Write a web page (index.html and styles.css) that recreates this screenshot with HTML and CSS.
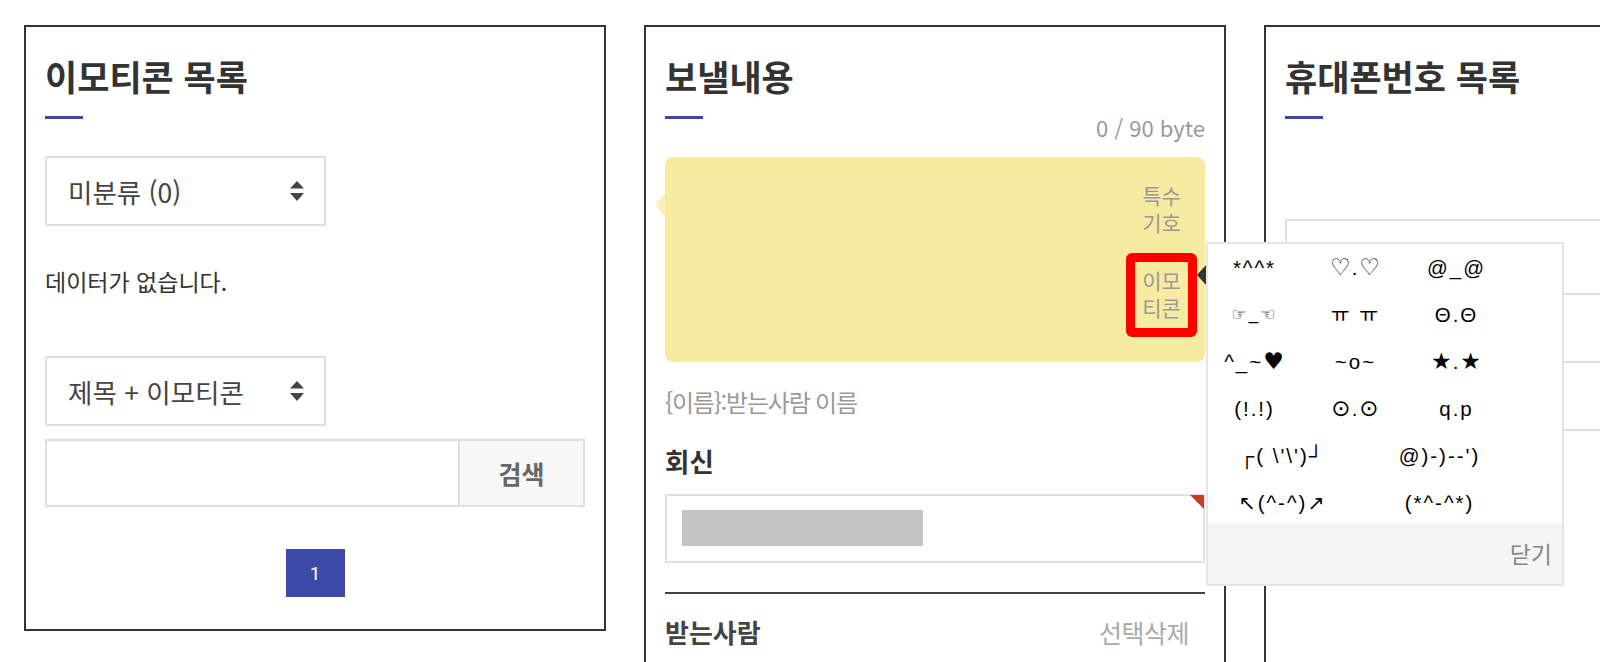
FILE: index.html
```html
<!DOCTYPE html>
<html lang="ko">
<head>
<meta charset="utf-8">
<title>문자 보내기</title>
<link rel="stylesheet" href="styles.css">
</head>
<body>
<div class="page">
  <section class="panel panel-emo">
    <h2 class="title">이모티콘 목록</h2>
    <div class="bar"><span class="accent"></span></div>
    <div class="select select-cat">
      <span class="select-text">미분류 (0)</span>
      <svg class="updown" width="14" height="20" viewBox="0 0 14 20"><path d="M0 7.5 L7 0 L14 7.5 Z M0 12 L14 12 L7 20 Z" fill="#444"/></svg>
    </div>
    <p class="empty">데이터가 없습니다.</p>
    <div class="select select-field">
      <span class="select-text">제목 + 이모티콘</span>
      <svg class="updown" width="14" height="20" viewBox="0 0 14 20"><path d="M0 7.5 L7 0 L14 7.5 Z M0 12 L14 12 L7 20 Z" fill="#444"/></svg>
    </div>
    <div class="search">
      <div class="search-input"></div>
      <div class="search-btn">검색</div>
    </div>
    <div class="paging"><span class="page-num">1</span></div>
  </section>

  <section class="panel panel-msg">
    <h2 class="title">보낼내용</h2>
    <div class="bar"><span class="accent"></span><span class="bytes">0 / 90 byte</span></div>
    <div class="bubble">
      <span class="bubble-tail"></span>
      <div class="bubble-text"></div>
      <div class="bubble-tools">
        <div class="tool">특수<br>기호</div>
        <div class="tool tool-active">이모<br>티콘</div>
      </div>
      <div class="emo-pop">
        <span class="emo-arrow"></span>
        <ul class="emo-list">
          <li>*^^*</li>
          <li><span class="sym">♡</span>.<span class="sym">♡</span></li>
          <li>@_@</li>
          <li class="hands">☞_☜</li>
          <li>ㅠ ㅠ</li>
          <li>Θ.Θ</li>
          <li>^_~<span class="sym">♥</span></li>
          <li>~o~</li>
          <li><span class="sym">★</span>.<span class="sym">★</span></li>
          <li>(!.!)</li>
          <li><span class="sym">⊙</span>.<span class="sym">⊙</span></li>
          <li>q.p</li>
          <li class="wide">┌( \'\')┘</li>
          <li class="wide">@)-)--')</li>
          <li class="wide">↖(^-^)↗</li>
          <li class="wide">(*^-^*)</li>
        </ul>
        <div class="emo-foot">닫기</div>
      </div>
    </div>
    <p class="hint">{이름}:받는사람 이름</p>
    <h3 class="label">회신</h3>
    <div class="reply">
      <span class="reply-value"></span>
      <span class="reply-flag"></span>
    </div>
    <div class="recv-head">
      <h3 class="label">받는사람</h3>
      <span class="recv-del">선택삭제</span>
    </div>
  </section>

  <section class="panel panel-phone">
    <h2 class="title">휴대폰번호 목록</h2>
    <div class="bar"><span class="accent"></span></div>
    <div class="phone-box">
      <div class="phone-row phone-row-head"></div>
      <div class="phone-row"></div>
      <div class="phone-row"></div>
    </div>
  </section>
</div>
</body>
</html>
```

FILE: styles.css
```css
html, body {
  margin: 0;
  padding: 0;
  background: #fff;
}

body {
  width: 1600px;
  height: 662px;
  overflow: hidden;
  font-family: "Noto Sans CJK KR", "Noto Sans", sans-serif;
  color: #333;
}

.page {
  display: flex;
  align-items: flex-start;
  gap: 38px;
  padding: 25px 0 0 24px;
}

.panel {
  flex: none;
  width: 582px;
  box-sizing: border-box;
  border: 2px solid #333;
  padding: 26px 19px 0;
  background: #fff;
}

.panel-emo {
  height: 606px;
}

.panel-msg,
.panel-phone {
  height: 720px;
}

.title {
  margin: 0;
  font-size: 35px;
  line-height: 46px;
  font-weight: 700;
  color: #333;
}

.bar {
  display: flex;
  justify-content: space-between;
  align-items: flex-start;
  height: 24px;
  margin-top: 16px;
}

.accent {
  display: block;
  width: 38px;
  height: 3px;
  margin-top: 1px;
  background: #3d49a6;
}

.bytes {
  font-size: 22px;
  line-height: 24px;
  color: #999;
}

/* ---------- panel 1 ---------- */
.select {
  display: flex;
  align-items: center;
  justify-content: space-between;
  box-sizing: border-box;
  width: 281px;
  height: 70px;
  border: 2px solid #e0e0e0;
  padding: 0 20px 0 21px;
}

.select-cat {
  margin-top: 17px;
}

.select-text {
  font-size: 26.5px;
  color: #444;
}

.updown {
  display: block;
}

.empty {
  margin: 40px 0 0;
  font-size: 23px;
  line-height: 30px;
  color: #333;
}

.select-field {
  margin-top: 60px;
}

.search {
  display: flex;
  height: 68px;
  margin-top: 13px;
}

.search-input {
  flex: 1;
  box-sizing: border-box;
  border: 2px solid #e0e0e0;
}

.search-btn {
  width: 125px;
  box-sizing: border-box;
  border: 2px solid #e0e0e0;
  border-left: none;
  background: #f7f7f7;
  display: flex;
  align-items: center;
  justify-content: center;
  font-size: 25px;
  font-weight: 700;
  color: #666;
}

.paging {
  display: flex;
  justify-content: center;
  margin-top: 42px;
}

.page-num {
  width: 59px;
  height: 48px;
  display: flex;
  align-items: center;
  justify-content: center;
  background: #3d49a6;
  color: #fff;
  font-family: "Roboto", "Noto Sans", sans-serif;
  font-size: 19px;
}

/* ---------- panel 2 ---------- */
.bubble {
  position: relative;
  display: flex;
  height: 205px;
  margin-top: 18px;
  background: #f7eba1;
  border-radius: 8px;
}

.bubble-tail {
  position: absolute;
  left: -10px;
  top: 36px;
  width: 0;
  height: 0;
  border-top: 12px solid transparent;
  border-bottom: 12px solid transparent;
  border-right: 10px solid #f9f0bb;
}

.bubble-text {
  flex: 1;
}

.bubble-tools {
  display: flex;
  flex-direction: column;
  gap: 1px;
  padding-top: 11px;
  margin-right: 8px;
}

.tool {
  width: 71px;
  box-sizing: border-box;
  border: 9px solid transparent;
  border-radius: 6px;
  padding: 5px 0 7px;
  text-align: center;
  font-size: 21px;
  line-height: 27px;
  color: #999;
}

.tool-active {
  border-color: #ff0000;
}

.emo-pop {
  position: absolute;
  left: 541px;
  top: 85px;
  z-index: 10;
  width: 358px;
  box-sizing: border-box;
  background: #fff;
  border: 2px solid #e6e6e6;
}

.emo-arrow {
  position: absolute;
  left: -11px;
  top: 21px;
  width: 0;
  height: 0;
  border-top: 10px solid transparent;
  border-bottom: 10px solid transparent;
  border-right: 9px solid #333;
}

.emo-list {
  display: flex;
  flex-wrap: wrap;
  align-content: flex-start;
  height: 279px;
  margin: 0 0 0 -4px;
  padding: 0;
  list-style: none;
  width: 359px;
}

.emo-list li {
  width: 101px;
  height: 47px;
  line-height: 47px;
  text-align: center;
  font-family: "Liberation Sans", "DejaVu Sans", "Noto Sans CJK KR", sans-serif;
  font-size: 20.5px;
  letter-spacing: 2px;
  color: #000;
  white-space: pre;
}

.emo-list .sym {
  font-family: "DejaVu Sans", sans-serif;
  font-size: 23px;
  letter-spacing: 1px;
}

.emo-list li.hands {
  font-size: 17px;
}

.emo-list li.wide {
  width: 157px;
}

.emo-foot {
  height: 61px;
  line-height: 61px;
  background: #f5f5f5;
  text-align: right;
  padding-right: 10px;
  font-size: 23px;
  color: #888;
}

.hint {
  margin: 25px 0 0;
  font-size: 24px;
  line-height: 30px;
  color: #999;
  letter-spacing: -1.2px;
}

.label {
  margin: 0;
  font-size: 26.5px;
  line-height: 32px;
  font-weight: 700;
  color: #333;
}

.hint + .label {
  margin-top: 28px;
}

.reply {
  position: relative;
  box-sizing: border-box;
  height: 69px;
  margin-top: 17px;
  border: 2px solid #e0e0e0;
  padding: 14px 15px 0;
}

.reply-value {
  display: block;
  width: 241px;
  height: 36px;
  background: #c4c4c4;
}

.reply-flag {
  position: absolute;
  right: -1px;
  top: -1px;
  width: 0;
  height: 0;
  border-top: 14px solid #c53b25;
  border-left: 14px solid transparent;
}

.recv-head {
  display: flex;
  justify-content: space-between;
  align-items: center;
  margin-top: 29px;
  border-top: 2px solid #444;
  padding: 20px 16px 0 0;
}

.recv-head .label {
  font-size: 26px;
  color: #444;
}

.recv-del {
  font-size: 25px;
  color: #aaa;
  letter-spacing: -0.5px;
}

/* ---------- panel 3 ---------- */
.phone-box {
  margin-top: 80px;
  border-top: 2px solid #e0e0e0;
  border-left: 2px solid #e0e0e0;
}

.phone-row {
  height: 66px;
  border-bottom: 2px solid #e0e0e0;
}

.phone-row-head {
  height: 72px;
}
```
